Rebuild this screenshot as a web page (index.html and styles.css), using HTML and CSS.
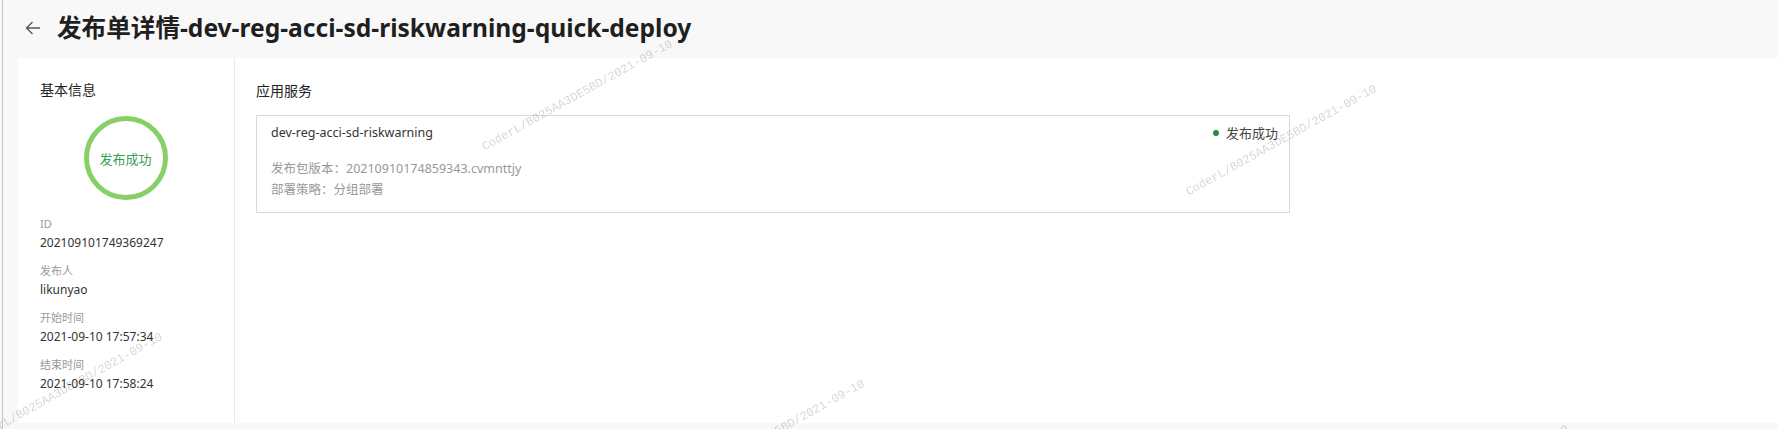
FILE: index.html
```html
<!DOCTYPE html>
<html lang="zh-CN">
<head>
<meta charset="utf-8">
<title>发布单详情</title>
<link rel="stylesheet" href="styles.css">
</head>
<body>
<div class="app">
  <header class="page-header">
    <span class="back" aria-label="返回">
      <svg width="16" height="14" viewBox="0 0 16 14"><path d="M15 7H1.5M7.5 1L1.5 7l6 6" fill="none" stroke="#555" stroke-width="1.3"/></svg>
    </span>
    <h1 class="title">发布单详情-dev-reg-acci-sd-riskwarning-quick-deploy</h1>
  </header>
  <main class="panel">
    <aside class="info">
      <h2 class="section-title">基本信息</h2>
      <div class="status-ring"><span>发布成功</span></div>
      <dl class="fields">
        <div class="field"><dt>ID</dt><dd>202109101749369247</dd></div>
        <div class="field"><dt>发布人</dt><dd>likunyao</dd></div>
        <div class="field"><dt>开始时间</dt><dd>2021-09-10 17:57:34</dd></div>
        <div class="field"><dt>结束时间</dt><dd>2021-09-10 17:58:24</dd></div>
      </dl>
    </aside>
    <section class="services">
      <h2 class="section-title">应用服务</h2>
      <div class="service-card">
        <div class="service-head">
          <span class="service-name">dev-reg-acci-sd-riskwarning</span>
          <span class="service-status"><i class="dot"></i>发布成功</span>
        </div>
        <div class="service-meta">
          <div>发布包版本：20210910174859343.cvmnttjy</div>
          <div>部署策略：分组部署</div>
        </div>
      </div>
    </section>
  </main>
</div>
<div class="watermarks" aria-hidden="true">
  <span class="wm wm1">CoderL/B025AA3DE5BD/2021-09-10</span>
  <span class="wm wm2">CoderL/B025AA3DE5BD/2021-09-10</span>
  <span class="wm wm3">CoderL/B025AA3DE5BD/2021-09-10</span>
  <span class="wm wm4">CoderL/B025AA3DE5BD/2021-09-10</span>
  <span class="wm wm5">CoderL/B025AA3DE5BD/2021-09-10</span>
</div>
</body>
</html>
```

FILE: styles.css
```css
html, body {
  margin: 0;
  padding: 0;
  height: 100%;
}
body {
  background: #f8f8f8;
  font-family: "Noto Sans", "Noto Sans CJK SC", sans-serif;
  color: #333;
  overflow: hidden;
}
.app {
  margin-left: 2px;
  border-left: 1px solid #c6c6c6;
  height: 429px;
  box-sizing: border-box;
  padding-left: 15px;
  display: flex;
  flex-direction: column;
}
.page-header {
  height: 58px;
  flex: none;
  display: flex;
  align-items: center;
}
.back {
  display: flex;
  margin-left: 7px;
  margin-right: 16px;
  margin-top: -2px;
}
.title {
  margin: 0;
  font-size: 24.6px;
  font-weight: 700;
  color: #1f1f1f;
  line-height: 32px;
  margin-top: -3px;
}
.panel {
  flex: 1;
  margin-bottom: 6px;
  background: #fff;
  display: flex;
}
.info {
  width: 217px;
  box-sizing: border-box;
  border-right: 1px solid #e8e8e8;
  padding: 21px 22px 0;
  display: flex;
  flex-direction: column;
}
.section-title {
  margin: 0;
  font-size: 14px;
  font-weight: 400;
  line-height: 22px;
  color: #222;
}
.status-ring {
  width: 84px;
  height: 84px;
  box-sizing: border-box;
  border: 5px solid #87d068;
  border-radius: 50%;
  align-self: center;
  margin: 15px 0 0 -1px;
  display: flex;
  align-items: center;
  justify-content: center;
  font-size: 13px;
  color: #36a055;
}
.fields {
  margin: 15px 0 0;
  display: flex;
  flex-direction: column;
  gap: 10px;
}
.field dt {
  font-size: 11px;
  line-height: 18px;
  color: #999;
}
.field dd {
  margin: 0;
  font-size: 12px;
  line-height: 19px;
  color: #333;
}
.services {
  flex: 1;
  padding: 22px 21px 0;
}
.service-card {
  margin-top: 13px;
  width: 1034px;
  box-sizing: border-box;
  border: 1px solid #d9d9d9;
  padding: 7px 11px 12px 14px;
}
.service-head {
  display: flex;
  justify-content: space-between;
  align-items: center;
  line-height: 20px;
}
.service-name {
  font-size: 12.5px;
  color: #333;
}
.service-status {
  display: flex;
  align-items: center;
  font-size: 13px;
  color: #444;
}
.dot {
  width: 6px;
  height: 6px;
  border-radius: 50%;
  background: #1e8e3e;
  margin-right: 7px;
}
.service-meta {
  margin-top: 15px;
  font-size: 12.5px;
  line-height: 21px;
  color: #999;
}
.watermarks {
  position: fixed;
  inset: 0;
  pointer-events: none;
  overflow: hidden;
}
.wm {
  position: absolute;
  font-family: "Liberation Mono", monospace;
  font-size: 12px;
  line-height: 14px;
  margin-top: -7px;
  color: rgba(0, 0, 0, 0.17);
  white-space: nowrap;
  transform-origin: 0 50%;
  transform: rotate(-29deg);
}
.wm1 { left: 483px; top: 148px; }
.wm2 { left: 1187px; top: 193px; }
.wm3 { left: -27px; top: 441px; }
.wm4 { left: 675px; top: 488px; }
.wm5 { left: 1379px; top: 533px; }
```
